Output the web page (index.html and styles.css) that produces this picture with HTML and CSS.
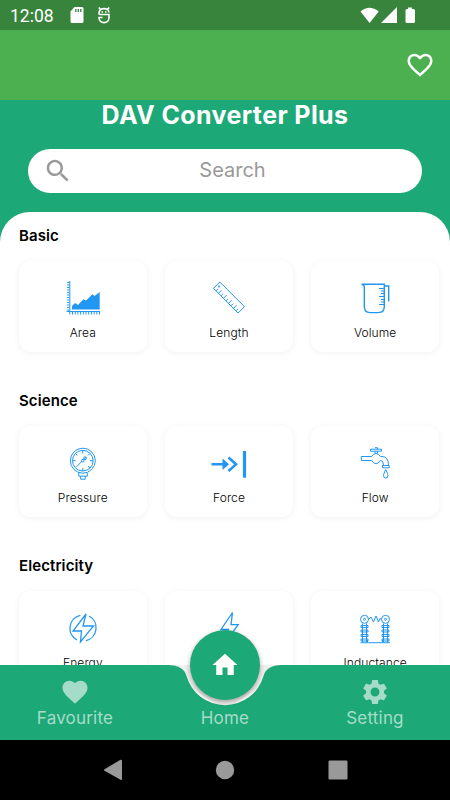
FILE: index.html
```
<!DOCTYPE html>
<html lang="en">
<head>
    <meta charset="UTF-8">
    <meta name="viewport" content="width=device-width, initial-scale=1.0">
    <title>DAV Converter Plus</title>
    <link rel="stylesheet" href="styles.css">
</head>
<body>
    <div class="wrap flex_column">
        <div class="status flex_row">
            <span class="time">12:08</span>
            <svg class="sd" width="14" height="16" viewBox="0 0 14 16"><path d="M4.500 0H12q1.500 0 1.500 1.500V14.500q0 1.500-1.500 1.500H2Q.5 16 .5 14.500V4.500z" fill="#fff"/><path d="M5.800 2v3M8.300 2v3M10.800 2v3" stroke="#39843c" stroke-width="1.300"/></svg>
            <svg class="bug" width="12" height="17" viewBox="0 0 12 17" fill="none" stroke="#fff" stroke-width="1.600"><path d="M.8 .5L2.500 2.500M11.200 .5L9.500 2.500M11 5.500C10.500 .2 1 .2 1 6.500Q1 7.500 2 7.500H11V10.500C11 17.300 1 17.300 1 10.500H4.500"/><path d="M3.500 5h1.500M7 5h1.500"/></svg>
            <svg class="signal" width="56" height="17" viewBox="0 0 56 17" fill="#fff"><path d="M.5 4.500Q9.500-3 18.700 4.500L9.600 16zM21 16L37 0V16zM45.500 3.500Q45.500 2 47 2H48V.5H52V2H53.500Q55 2 55 3.500V14.500Q55 16 53.500 16H47Q45.500 16 45.500 14.500z"/></svg>
        </div>
        <div class="appbar flex_row">
            <svg width="30" height="30" viewBox="0 0 24 24" fill="#fff"><path d="M16.500 3c-1.740 0-3.410.81-4.500 2.090C10.910 3.810 9.240 3 7.500 3 4.420 3 2 5.420 2 8.500c0 3.780 3.400 6.860 8.550 11.540L12 21.350l1.450-1.320C18.600 15.360 22 12.280 22 8.500 22 5.420 19.580 3 16.500 3zm-4.400 15.550l-.1.100-.1-.1C7.140 14.240 4 11.390 4 8.500 4 6.500 5.500 5 7.500 5c1.540 0 3.040.99 3.570 2.360h1.870C13.460 5.990 14.960 5 16.500 5c2 0 3.500 1.500 3.500 3.500 0 2.890-3.140 5.740-7.900 10.050z"/></svg>
        </div>
        <div class="header flex_column">
            <h1>DAV Converter Plus</h1>
            <div class="search flex_row">
                <svg width="30" height="30" viewBox="0 0 24 24" fill="#999"><path d="M15.500 14h-.79l-.28-.27C15.410 12.590 16 11.110 16 9.500 16 5.910 13.090 3 9.500 3S3 5.910 3 9.500 5.910 16 9.500 16c1.610 0 3.090-.59 4.230-1.570l.27.28v.79l5 4.990L20.490 19l-4.990-5zm-6 0C7.010 14 5 11.990 5 9.500S7.010 5 9.500 5 14 7.010 14 9.500 11.990 14 9.500 14z"/></svg>
                <span>Search</span>
            </div>
        </div>
        <div class="content">
            <div class="sheet">
                <h2>Basic</h2>
                <div class="cards">
                    <div class="items">
                        <svg class="icon" viewBox="0 0 44 44">
                            <path d="M8.800 5V38.500M5.500 35.500H39"/>
                            <path d="M7.200 6V35" stroke-width="2.200" stroke-dasharray="1 1.500"/>
                            <path d="M11 37.300H39" stroke-width="2.600" stroke-dasharray="1 1.700"/>
                            <path class="solid" d="M11 33.500V30L14 27L17 29L22.500 23.300L25 24.500L31.500 18.300L33.500 20L38.700 16V33.500z"/>
                        </svg>
                        <p class="label">Area</p>
                    </div>
                    <div class="items">
                        <svg class="icon" viewBox="0 0 44 44">
                            <path d="M6.500 12.300L12.800 6L37.500 30.700L31 37z"/>
                            <path d="M9 14.800l2-2M11.500 17.300l3-3M14 19.800l2-2M16.500 22.300l3-3M19 24.800l2-2M21.500 27.300l3-3M24 29.800l2-2M26.500 32.300l3-3M29 34.800l2-2"/>
                            <circle cx="12" cy="10.500" r=".7"/>
                        </svg>
                        <p class="label">Length</p>
                    </div>
                    <div class="items">
                        <svg class="icon" viewBox="0 0 44 44">
                            <path stroke-width="1.400" d="M8.500 8.300H31.300V30.500Q31.300 36.600 25.500 36.600H17Q11.300 36.600 11.300 30.500V11Q11.300 9 8.500 8.300M31.300 10H35.700V25.500"/>
                            <path stroke-width="1.200" d="M26 12.500h5M28 15h3M28 17.500h3M26 20.500h5M28 23.500h3M28 26h3M26 28.500h5"/>
                        </svg>
                        <p class="label">Volume</p>
                    </div>
                </div>
                <h2>Science</h2>
                <div class="cards">
                    <div class="items">
                        <svg class="icon" viewBox="0 0 44 44">
                            <circle cx="21.800" cy="19.700" r="12.500"/>
                            <circle cx="21.800" cy="19.700" r="10.300"/>
                            <path d="M21.800 9.500v3M21.800 30v-3M11.500 19.700h3M32 19.700h-3M14.500 12.500l2 2M29 12.500l-2 2M29 27l-2-2M15.500 26L21 20M22.500 19L25 16.500M17.800 32v3.200h8.500V32M19.700 35.200v3h4.500v-3"/>
                            <circle cx="21.800" cy="19.700" r="1.300"/>
                            <circle cx="24" cy="17.200" r="1.400"/>
                        </svg>
                        <p class="label">Pressure</p>
                    </div>
                    <div class="items">
                        <svg class="icon" viewBox="0 0 44 44">
                            <path stroke-width="2.600" d="M4.500 23.300H17M21.500 16.500L29 23.300L21.500 30.100"/>
                            <path class="solid" d="M15.500 17.500L22 23.300L15.500 29.100z"/>
                            <path stroke-width="3.200" d="M37.500 10V36.700"/>
                        </svg>
                        <p class="label">Force</p>
                    </div>
                    <div class="items">
                        <svg class="icon" viewBox="0 0 44 44">
                            <path d="M8.300 15.500H18.500Q23 9.500 27.500 15.500H29Q35.500 15.500 35.500 24.500H30.500Q30.500 20 28 19.500H27.500Q23 26 18.500 19.500H8.300zM29.500 24.500H36.200V26.800H29.500zM17.500 8.200H28.500V10.200H17.500zM22 6.700h2.500V8.200M22 10.200V12.300M24.500 10.200V12.300M32.700 28.500Q30.500 33 30.500 34.500Q30.500 37 32.700 37Q35 37 35 34.500Q35 33 32.700 28.500z"/>
                        </svg>
                        <p class="label">Flow</p>
                    </div>
                </div>
                <h2>Electricity</h2>
                <div class="cards">
                    <div class="items">
                        <svg class="icon" viewBox="0 0 44 44">
                            <path stroke-width="1.300" d="M19.300 9.300A13.300 13.300 0 0 0 16 34M24.800 34.700A13.300 13.300 0 0 0 28 10"/>
                            <path stroke-width="1.300" d="M25 8L12 25H20.500L19.500 36L32.500 20H22z"/>
                        </svg>
                        <p class="label">Energy</p>
                    </div>
                    <div class="items">
                        <svg class="icon" viewBox="0 0 44 44">
                            <path stroke-width="1.300" d="M25.500 6.500L14 23.500H21.500L18 37L31.200 18.700H24z"/>
                        </svg>
                        <p class="label">Power</p>
                    </div>
                    <div class="items">
                        <svg class="icon" viewBox="0 0 44 44">
                            <circle cx="11.500" cy="13.300" r="4"/>
                            <circle cx="32.500" cy="13.300" r="4"/>
                            <circle cx="11.500" cy="13.300" r="1"/>
                            <circle cx="32.500" cy="13.300" r="1"/>
                            <path d="M15.500 13.500L18 11L20.500 16L23 10L25.500 16L27 12.500L28.500 13.500M7.500 36.700H37M14.500 36.700V34M29.500 36.700V34"/>
                            <path d="M9.500 17.500V36M13.500 17.500V36M30.500 17.500V36M34.500 17.500V36"/>
                            <path d="M8 19.500h7v2h-7zM8 24h7v2h-7zM8 28.500h7v2h-7zM8 33h7v2h-7zM29 19.500h7v2h-7zM29 24h7v2h-7zM29 28.500h7v2h-7zM29 33h7v2h-7z"/>
                        </svg>
                        <p class="label">Inductance</p>
                    </div>
                </div>
            </div>
        </div>
        <div class="tabbar">
            <svg class="notch" width="450" height="75" viewBox="0 0 450 75"><path d="M168 0H282L263.500 20L225 45L186.500 20z" fill="#f0f0f0"/><path d="M0 0H168C179 0 184.500 4 186.500 11A40 40 0 0 0 263.500 11C265.500 4 271 0 282 0H450V75H0z" fill="#1da877"/></svg>
            <ul class="flex_row">
                <li>
                    <svg width="30" height="30" viewBox="0 0 24 24"><path d="M12 21.350l-1.450-1.320C5.400 15.360 2 12.280 2 8.500 2 5.420 4.420 3 7.500 3c1.740 0 3.410.81 4.500 2.090C13.090 3.810 14.760 3 16.500 3 19.580 3 22 5.420 22 8.500c0 3.780-3.400 6.860-8.550 11.540L12 21.350z"/></svg>
                    <span>Favourite</span>
                </li>
                <li><span>Home</span></li>
                <li>
                    <svg width="30" height="30" viewBox="0 0 24 24"><path d="M19.140 12.940c.04-.3.060-.61.060-.94 0-.32-.02-.64-.07-.94l2.030-1.580c.18-.14.230-.41.120-.61l-1.920-3.320c-.12-.22-.37-.29-.59-.22l-2.390.96c-.5-.38-1.030-.7-1.620-.94l-.36-2.540c-.04-.24-.24-.41-.48-.41h-3.840c-.24 0-.43.17-.47.410l-.36 2.540c-.59.240-1.130.57-1.620.94l-2.390-.96c-.22-.08-.47 0-.59.220L2.740 8.870c-.12.210-.08.470.12.610l2.030 1.580c-.05.300-.09.630-.09.940s.02.640.07.940l-2.030 1.580c-.18.140-.23.410-.12.610l1.920 3.320c.12.220.37.290.59.220l2.390-.96c.5.380 1.030.7 1.620.94l.36 2.540c.05.240.24.410.48.410h3.840c.24 0 .44-.17.470-.41l.36-2.540c.59-.24 1.130-.56 1.620-.94l2.390.96c.22.080.47 0 .59-.22l1.920-3.320c.12-.22.070-.47-.12-.61l-2.010-1.580zM12 15.600c-1.980 0-3.600-1.620-3.600-3.600s1.620-3.600 3.600-3.600 3.600 1.620 3.600 3.600-1.620 3.600-3.600 3.600z"/></svg>
                    <span>Setting</span>
                </li>
            </ul>
            <div class="fab">
                <svg width="30" height="30" viewBox="0 0 24 24" fill="#fff"><path d="M10 20v-6h4v6h5v-8h3L12 3 2 12h3v8z"/></svg>
            </div>
        </div>
        <div class="sysnav flex_row">
            <svg width="20" height="22" viewBox="0 0 20 22"><path d="M1.500 10.300L17.500.8Q19 .3 19 2V20Q19 21.500 17.500 20.700L1.500 11.800Q.5 11 1.500 10.300z"/></svg>
            <svg width="20" height="20" viewBox="0 0 20 20"><circle cx="10" cy="10" r="9.200"/></svg>
            <svg width="20" height="20" viewBox="0 0 20 20"><rect x=".5" y=".5" width="19" height="19" rx="1.300"/></svg>
        </div>
    </div>
</body>
</html>
```
FILE: styles.css
```
* {
    padding: 0;
    margin: 0;
    box-sizing: border-box;
}
body {
    font-family: Inter, "Liberation Sans", sans-serif;
    background-color: #fff;
}
svg {
    display: block;
    flex: none;
}
.wrap {
    width: 450px;
    height: 800px;
    overflow: hidden;
    position: relative;
}
.flex_row {
    display: flex;
    align-items: center;
}
.flex_column {
    display: flex;
    flex-direction: column;
}

.status {
    height: 30px;
    padding: 0 34px 0 10px;
    background-color: #39843c;
    color: #fff;
}
.status .time {
    font-family: Roboto, sans-serif;
    font-size: 17.5px;
    width: 60px;
    padding-top: 1px;
}
.status .bug {
    margin-left: 14px;
}
.status .signal {
    margin-left: auto;
}

.appbar {
    height: 70px;
    padding-right: 15px;
    justify-content: flex-end;
    background-color: #4caf50;
}

.header {
    height: 112px;
    padding: 0 28px;
    background-color: #1da877;
}
.header h1 {
    height: 49px;
    line-height: 31px;
    color: #fff;
    font-size: 25px;
    font-weight: 700;
    letter-spacing: 0.4px;
    text-align: center;
}
.search {
    height: 44px;
    padding: 0 15px;
    border-radius: 22px;
    background-color: #fff;
}
.search span {
    flex: 1;
    padding-bottom: 3px;
    margin: 0 30px 0 15px;
    text-align: center;
    color: #999;
    font-size: 20px;
}

.content {
    height: 528px;
    flex: none;
    overflow: hidden;
    background-color: #1da877;
}
.content .sheet {
    height: 528px;
    padding: 14px 11px 0 19px;
    border-radius: 30px 30px 0 0;
    background-color: #fff;
    overflow: hidden;
}
.content h2 {
    height: 35px;
    line-height: 20px;
    font-size: 15px;
    font-weight: 600;
    letter-spacing: 0.1px;
}
.content .cards {
    display: grid;
    grid-template-columns: repeat(3, 1fr);
    column-gap: 18.5px;
    margin-bottom: 39px;
}
.content .items {
    height: 91px;
    padding-top: 15px;
    border-radius: 12px;
    box-shadow: 0 1px 7px rgba(0, 0, 0, 0.06);
    text-align: center;
}
.content .icon {
    width: 44px;
    height: 44px;
    margin: 0 auto;
    fill: none;
    stroke: #2196f3;
    stroke-width: 1;
}
.content .icon .solid {
    fill: #2196f3;
    stroke: none;
}
.content .label {
    margin-top: 5px;
    line-height: 16px;
    font-size: 12px;
    font-weight: 350;
    color: #000;
    letter-spacing: 0.1px;
}

.tabbar {
    position: absolute;
    left: 0;
    bottom: 60px;
    width: 450px;
    height: 75px;
}
.tabbar .notch {
    position: absolute;
    left: 0;
    top: 0;
}
.tabbar ul {
    position: relative;
    height: 75px;
    list-style: none;
}
.tabbar li {
    flex: 1;
    height: 75px;
    padding-bottom: 11px;
    display: flex;
    flex-direction: column;
    align-items: center;
    justify-content: flex-end;
    fill: #a5dcc9;
    color: #a5dcc9;
    font-size: 17px;
    line-height: 22px;
    letter-spacing: 0.2px;
}
.tabbar .fab {
    position: absolute;
    left: 190px;
    top: -35px;
    width: 70px;
    height: 70px;
    border-radius: 50%;
    display: flex;
    align-items: center;
    justify-content: center;
    background-color: #1da877;
    box-shadow: 0 2px 5px rgba(0, 0, 0, 0.35);
}

.sysnav {
    height: 60px;
    flex: none;
    justify-content: center;
    gap: 92.5px;
    background-color: #000;
    fill: #999;
}
```
